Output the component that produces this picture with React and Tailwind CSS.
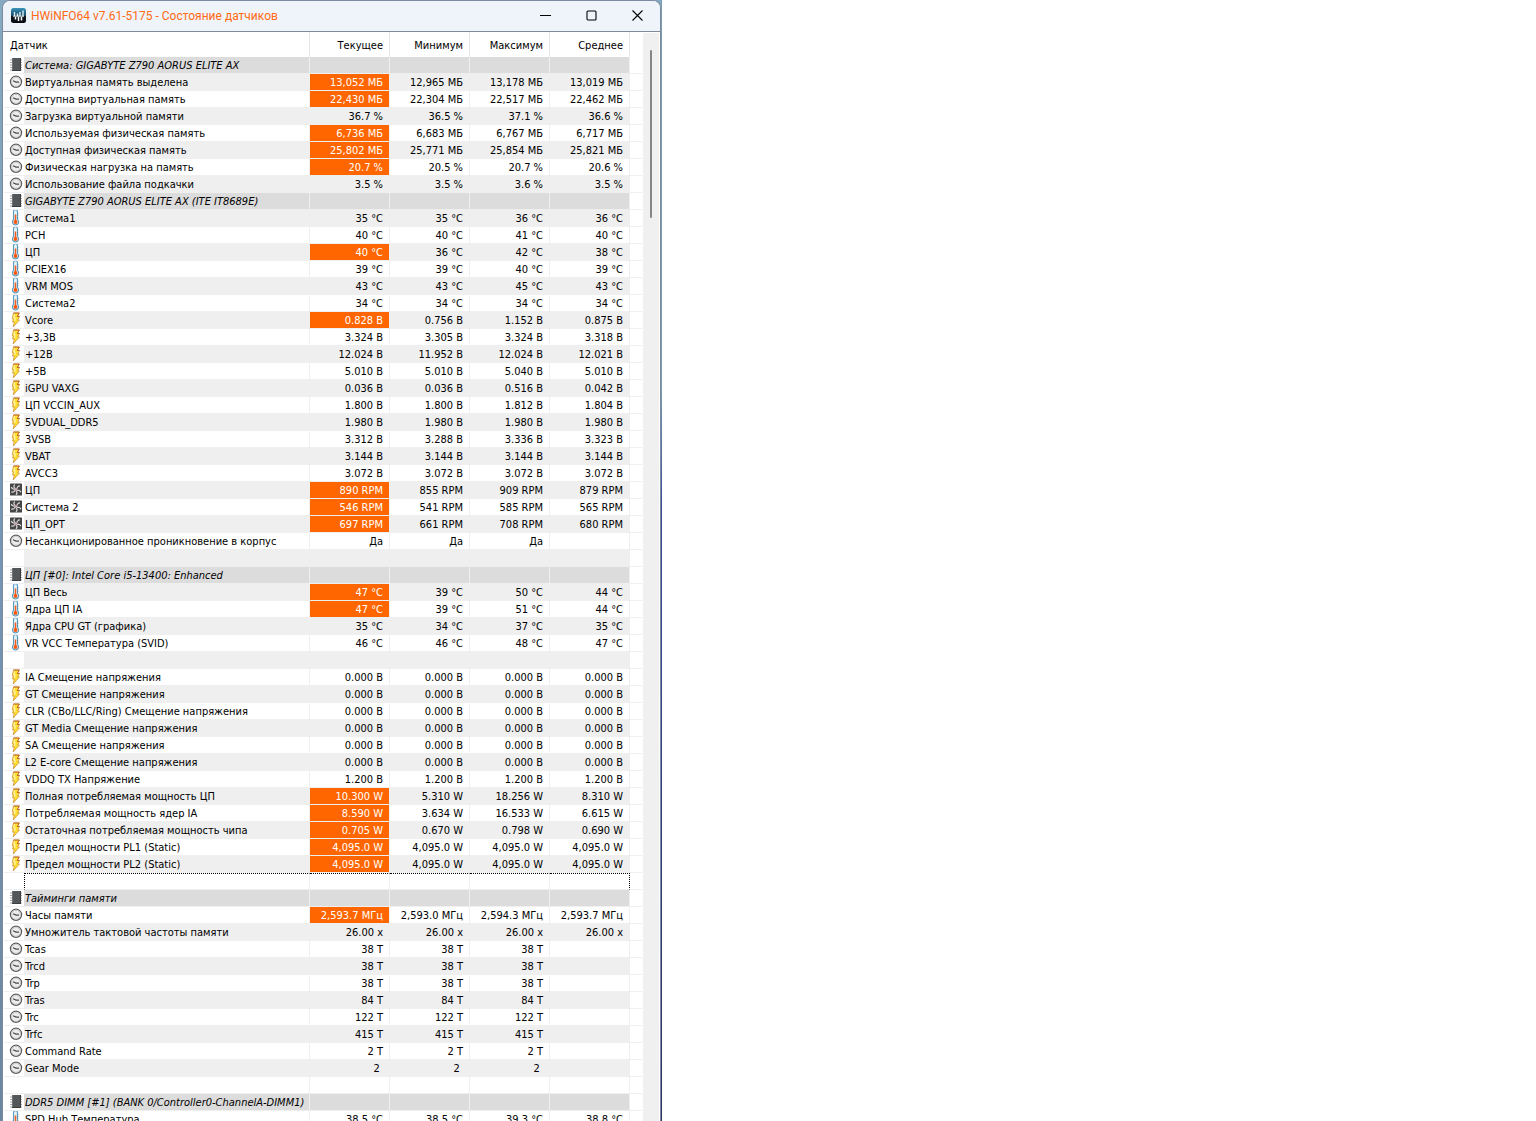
const ROWS = [
  ['chip', 'Система: GIGABYTE Z790 AORUS ELITE AX'],
  ['clock', 'Виртуальная память выделена', '13,052 МБ', '12,965 МБ', '13,178 МБ', '13,019 МБ', true],
  ['clock', 'Доступна виртуальная память', '22,430 МБ', '22,304 МБ', '22,517 МБ', '22,462 МБ', true],
  ['clock', 'Загрузка виртуальной памяти', '36.7 %', '36.5 %', '37.1 %', '36.6 %'],
  ['clock', 'Используемая физическая память', '6,736 МБ', '6,683 МБ', '6,767 МБ', '6,717 МБ', true],
  ['clock', 'Доступная физическая память', '25,802 МБ', '25,771 МБ', '25,854 МБ', '25,821 МБ', true],
  ['clock', 'Физическая нагрузка на память', '20.7 %', '20.5 %', '20.7 %', '20.6 %', true],
  ['clock', 'Использование файла подкачки', '3.5 %', '3.5 %', '3.6 %', '3.5 %'],
  ['chip', 'GIGABYTE Z790 AORUS ELITE AX (ITE IT8689E)'],
  ['temp', 'Система1', '35 °C', '35 °C', '36 °C', '36 °C'],
  ['temp', 'PCH', '40 °C', '40 °C', '41 °C', '40 °C'],
  ['temp', 'ЦП', '40 °C', '36 °C', '42 °C', '38 °C', true],
  ['temp', 'PCIEX16', '39 °C', '39 °C', '40 °C', '39 °C'],
  ['temp', 'VRM MOS', '43 °C', '43 °C', '45 °C', '43 °C'],
  ['temp', 'Система2', '34 °C', '34 °C', '34 °C', '34 °C'],
  ['volt', 'Vcore', '0.828 В', '0.756 В', '1.152 В', '0.875 В', true],
  ['volt', '+3,3В', '3.324 В', '3.305 В', '3.324 В', '3.318 В'],
  ['volt', '+12В', '12.024 В', '11.952 В', '12.024 В', '12.021 В'],
  ['volt', '+5В', '5.010 В', '5.010 В', '5.040 В', '5.010 В'],
  ['volt', 'iGPU VAXG', '0.036 В', '0.036 В', '0.516 В', '0.042 В'],
  ['volt', 'ЦП VCCIN_AUX', '1.800 В', '1.800 В', '1.812 В', '1.804 В'],
  ['volt', '5VDUAL_DDR5', '1.980 В', '1.980 В', '1.980 В', '1.980 В'],
  ['volt', '3VSB', '3.312 В', '3.288 В', '3.336 В', '3.323 В'],
  ['volt', 'VBAT', '3.144 В', '3.144 В', '3.144 В', '3.144 В'],
  ['volt', 'AVCC3', '3.072 В', '3.072 В', '3.072 В', '3.072 В'],
  ['fan', 'ЦП', '890 RPM', '855 RPM', '909 RPM', '879 RPM', true],
  ['fan', 'Система 2', '546 RPM', '541 RPM', '585 RPM', '565 RPM', true],
  ['fan', 'ЦП_OPT', '697 RPM', '661 RPM', '708 RPM', '680 RPM', true],
  ['clock', 'Несанкционированное проникновение в корпус', 'Да', 'Да', 'Да', ''],
  ['blank'],
  ['chip', 'ЦП [#0]: Intel Core i5-13400: Enhanced'],
  ['temp', 'ЦП Весь', '47 °C', '39 °C', '50 °C', '44 °C', true],
  ['temp', 'Ядра ЦП IA', '47 °C', '39 °C', '51 °C', '44 °C', true],
  ['temp', 'Ядра CPU GT (графика)', '35 °C', '34 °C', '37 °C', '35 °C'],
  ['temp', 'VR VCC Температура (SVID)', '46 °C', '46 °C', '48 °C', '47 °C'],
  ['blank'],
  ['volt', 'IA Смещение напряжения', '0.000 В', '0.000 В', '0.000 В', '0.000 В'],
  ['volt', 'GT Смещение напряжения', '0.000 В', '0.000 В', '0.000 В', '0.000 В'],
  ['volt', 'CLR (CBo/LLC/Ring) Смещение напряжения', '0.000 В', '0.000 В', '0.000 В', '0.000 В'],
  ['volt', 'GT Media Смещение напряжения', '0.000 В', '0.000 В', '0.000 В', '0.000 В'],
  ['volt', 'SA Смещение напряжения', '0.000 В', '0.000 В', '0.000 В', '0.000 В'],
  ['volt', 'L2 E-core Смещение напряжения', '0.000 В', '0.000 В', '0.000 В', '0.000 В'],
  ['volt', 'VDDQ TX Напряжение', '1.200 В', '1.200 В', '1.200 В', '1.200 В'],
  ['volt', 'Полная потребляемая мощность ЦП', '10.300 W', '5.310 W', '18.256 W', '8.310 W', true],
  ['volt', 'Потребляемая мощность ядер IA', '8.590 W', '3.634 W', '16.533 W', '6.615 W', true],
  ['volt', 'Остаточная потребляемая мощность чипа', '0.705 W', '0.670 W', '0.798 W', '0.690 W', true],
  ['volt', 'Предел мощности PL1 (Static)', '4,095.0 W', '4,095.0 W', '4,095.0 W', '4,095.0 W', true],
  ['volt', 'Предел мощности PL2 (Static)', '4,095.0 W', '4,095.0 W', '4,095.0 W', '4,095.0 W', true],
  ['focus'],
  ['chip', 'Тайминги памяти'],
  ['clock', 'Часы памяти', '2,593.7 МГц', '2,593.0 МГц', '2,594.3 МГц', '2,593.7 МГц', true],
  ['clock', 'Умножитель тактовой частоты памяти', '26.00 x', '26.00 x', '26.00 x', '26.00 x'],
  ['clock', 'Tcas', '38 T', '38 T', '38 T', ''],
  ['clock', 'Trcd', '38 T', '38 T', '38 T', ''],
  ['clock', 'Trp', '38 T', '38 T', '38 T', ''],
  ['clock', 'Tras', '84 T', '84 T', '84 T', ''],
  ['clock', 'Trc', '122 T', '122 T', '122 T', ''],
  ['clock', 'Trfc', '415 T', '415 T', '415 T', ''],
  ['clock', 'Command Rate', '2 T', '2 T', '2 T', ''],
  ['clock', 'Gear Mode', '2 ', '2 ', '2 ', ''],
  ['blank'],
  ['chip', 'DDR5 DIMM [#1] (BANK 0/Controller0-ChannelA-DIMM1)'],
  ['temp', 'SPD Hub Температура', '38.5 °C', '38.5 °C', '39.3 °C', '38.8 °C'],
];

const ICONS = {
  chip: (
    <>
      <path d="M2 3h12M2 5.5h12M2 8h12M2 10.5h12M2 13h12" stroke="#a4a4a4" strokeWidth="1.2" />
      <rect x="4" y="1" width="9" height="13" fill="#54575a" />
      <path d="M4.5 1v13" stroke="#6f7274" />
      <path d="M12.500 1v13M4 13.500h9" stroke="#3c3d3f" />
    </>
  ),
  clock: (
    <>
      <circle cx="8" cy="7.800" r="5.600" fill="#ececec" stroke="#5c5c5c" strokeWidth="1.200" />
      <circle cx="8" cy="7.800" r="4.500" fill="none" stroke="#c4c4c4" strokeWidth="0.800" />
      <path d="M5 6.800l3 1.300h3" fill="none" stroke="#4a4a4a" strokeWidth="1.100" />
    </>
  ),
  temp: (
    <>
      <path d="M5.500 1.800a2 2 0 0 1 4 0v7.700a3.100 3.100 0 1 1-4 0z" fill="#e2f4fb" stroke="#5d9cc0" strokeWidth="1.100" />
      <path d="M7.500 4.500v7" stroke="#ee5f22" strokeWidth="1.600" />
      <circle cx="7.500" cy="11.900" r="2" fill="#f9590f" />
      <path d="M9.200 3.500h1.200M9.200 5.500h1.200M9.200 7.500h1.200" stroke="#4b7f9f" strokeWidth="0.700" />
    </>
  ),
  volt: (
    <>
      <path
        d="M5.500 1h5.800L9.300 4.500h2.200L9.700 8h1.700L5.200 15l1.100-5H4.500l1-3.200H4.200z"
        fill="#ffe02e"
        stroke="#d0923a"
        strokeWidth="0.800"
        strokeLinejoin="round"
      />
      <path d="M6.500 2.300L5.800 6h1.400L6.600 9" fill="none" stroke="#fff8c4" strokeWidth="1" />
      <path d="M5.500 1h5.800L9.300 4.500h2.200" fill="none" stroke="#b5561f" strokeWidth="0.800" />
    </>
  ),
  fan: (
    <>
      <rect x="2" y="1.500" width="12" height="12" rx="0.500" fill="#454545" />
      <path
        d="M7.300 6.500C5.500 5.500 5.500 3.800 6.800 2.500M9 6.800c0-2 1.300-3 3-2.800M9 8.500c1.800-.6 3.300.2 3.800 1.800M8 8.800c1.300 1.300 1 3 0 4M7 8.200c-.8 1.800-2.300 2.300-3.800 1.800M6.800 7.200C5 7.500 3.700 6.500 3.300 5"
        fill="none"
        stroke="#d6d6d6"
        strokeWidth="1.200"
      />
      <circle cx="8" cy="7.500" r="1.300" fill="#d9b3b3" />
    </>
  ),
};

function SensorIcon({ type }) {
  if (!ICONS[type]) return null;
  return (
    <svg width="16" height="16" viewBox="0 0 16 16" className="ml-1 block" aria-hidden="true">
      {ICONS[type]}
    </svg>
  );
}

function SensorRow({ row, index }) {
  const [type, label = '', current, min, max, avg, changed] = row;
  const group = type === 'chip';
  const focused = type === 'focus';
  const bg = group ? 'bg-[#dcdcdc]' : index % 2 ? 'bg-[#efefef]' : 'bg-white';
  const outline = focused ? 'border-t border-t-black [border-top-style:dotted]' : 'pt-px';
  const cell = `h-[17px] border-r border-b border-[#efefef] whitespace-pre ${outline}`;

  return (
    <tr>
      <td className="h-[17px] border-b border-[#efefef] bg-white p-0">
        <SensorIcon type={type} />
      </td>
      <th
        scope="row"
        className={`${cell} ${bg} overflow-hidden pl-px text-left font-normal ${group ? 'italic' : ''} ${focused ? 'border-l border-l-black [border-left-style:dotted]' : ''}`}
      >
        {label}
      </th>
      {[current, min, max, avg].map((value, i) => (
        <td
          key={i}
          className={`${cell} pr-1.5 text-right ${i === 0 && changed ? 'bg-[#ff6600] text-white' : bg} ${focused && i === 3 ? 'border-r-black [border-right-style:dotted]' : ''}`}
        >
          {value}
        </td>
      ))}
      <td className="border-b border-[#efefef] p-0" />
    </tr>
  );
}

function TitleBar() {
  return (
    <header className="flex h-[31px] shrink-0 items-center border-b border-[#828b99] bg-[#eff4fb] pb-px">
      <svg width="15" height="15" viewBox="0 0 15 15" className="ml-2 shrink-0" aria-hidden="true">
        <defs>
          <linearGradient id="logo" x1="0" y1="0" x2="0" y2="1">
            <stop offset="0" stopColor="#3a94bd" />
            <stop offset="0.5" stopColor="#1c4a61" />
            <stop offset="0.55" stopColor="#10191f" />
            <stop offset="1" stopColor="#080b0e" />
          </linearGradient>
        </defs>
        <rect width="15" height="15" rx="2.500" fill="url(#logo)" />
        <path d="M3.500 4v4M6.500 5.500V8M9 4v4M12 2.500V8" stroke="#d9eef7" strokeWidth="1.400" />
        <path d="M2 8.200h11" stroke="#e9f5fa" strokeWidth="1" />
        <path d="M4.500 9v2.500M7.500 9v4M10.500 9v3.500" stroke="#ffffff" strokeWidth="1.500" />
      </svg>
      <h1 className="ml-[5px] min-w-0 flex-1 truncate font-['Roboto',sans-serif] text-xs text-[#ff6a13]">
        HWiNFO64 v7.61-5175 - Состояние датчиков
      </h1>
      <div className="flex h-full shrink-0">
        <button aria-label="Свернуть" className="grid w-[46px] place-items-center">
          <svg width="11" height="11" viewBox="0 0 11 11"><path d="M0 5.500h11" stroke="#000" /></svg>
        </button>
        <button aria-label="Развернуть" className="grid w-[46px] place-items-center">
          <svg width="11" height="11" viewBox="0 0 11 11" fill="none"><rect x="1" y="1" width="9" height="9" rx="1" stroke="#000" strokeWidth="1.100" /></svg>
        </button>
        <button aria-label="Закрыть" className="grid w-[46px] place-items-center">
          <svg width="11" height="11" viewBox="0 0 11 11"><path d="M.5.5l10 10M10.500.5l-10 10" stroke="#000" strokeWidth="1.100" /></svg>
        </button>
      </div>
    </header>
  );
}

export default function App() {
  return (
    <div className="h-screen overflow-hidden bg-white">
      <div className="flex h-full w-full max-w-[662px] bg-linear-to-b from-[#86aac2] via-[#7595b2] to-[#6d86a0] pl-0.5">
        <main className="flex min-w-0 flex-1 flex-col overflow-hidden rounded-t-lg border-x border-t border-[#7c8ba0] bg-white">
          <TitleBar />
          <div className="flex min-h-0 flex-1">
            <div className="min-w-0 flex-1 overflow-hidden px-px">
              <table className="w-full table-fixed border-separate border-spacing-0 font-['DejaVu_Sans_Condensed',sans-serif] text-[11px] leading-[15px] text-black">
                <colgroup>
                  <col className="w-5" />
                  <col />
                  <col className="w-20" />
                  <col className="w-20" />
                  <col className="w-20" />
                  <col className="w-20" />
                  <col className="w-3" />
                </colgroup>
                <thead>
                  <tr>
                    <th colSpan={2} className="h-[25px] border-r border-[#e5e5e5] pt-px pl-1.5 text-left font-normal">Датчик</th>
                    {['Текущее', 'Минимум', 'Максимум', 'Среднее'].map((name) => (
                      <th key={name} className="border-r border-[#e5e5e5] pt-px pr-1.5 text-right font-normal">{name}</th>
                    ))}
                    <th className="p-0" />
                  </tr>
                </thead>
                <tbody>
                  {ROWS.map((row, i) => (
                    <SensorRow key={i} row={row} index={i} />
                  ))}
                </tbody>
              </table>
            </div>
            {/* scrollbar track */}
            <div className="mt-px mr-px flex w-4 shrink-0 justify-center bg-[#f0f0f0] pt-[17px]">
              <div className="h-[168px] w-0.5 rounded-full bg-[#868686]" />
            </div>
          </div>
        </main>
        {/* desktop showing past the right edge */}
        <div className="w-px bg-linear-to-b from-[#7b9bb3] from-35% via-[#3c4f96] via-45% to-[#2d3263]" />
      </div>
    </div>
  );
}
